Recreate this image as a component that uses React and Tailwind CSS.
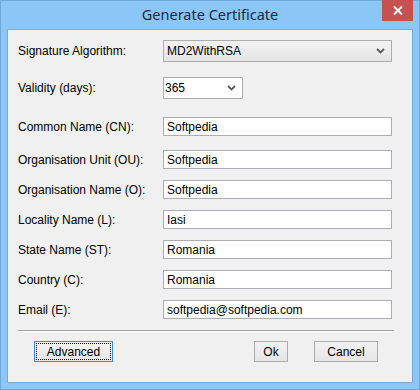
import React from 'react';

const Chevron = () => (
    <svg width="9" height="6" viewBox="0 0 9 6" className="shrink-0">
        <path d="M1 1 L4.5 4.5 L8 1" fill="none" stroke="#5a5a5a" strokeWidth="1.8" />
    </svg>
);

const fields = [
    { label: 'Common Name (CN):', value: 'Softpedia', mt: 'mt-[18px]' },
    { label: 'Organisation Unit (OU):', value: 'Softpedia', mt: 'mt-[14px]' },
    { label: 'Organisation Name (O):', value: 'Softpedia', mt: 'mt-[11px]' },
    { label: 'Locality Name (L):', value: 'Iasi', mt: 'mt-[11px]' },
    { label: 'State Name (ST):', value: 'Romania', mt: 'mt-[11px]' },
    { label: 'Country (C):', value: 'Romania', mt: 'mt-[11px]' },
    { label: 'Email (E):', value: 'softpedia@softpedia.com', mt: 'mt-[11px]' },
];

const Row = ({ label, mt, children }) => (
    <div className={`flex items-center ${mt}`}>
        <div className="w-[145px] shrink-0">{label}</div>
        {children}
    </div>
);

export default function App() {
    return (
        <div
            className="w-[420px] h-[390px] bg-[#8cc6f6] border border-[#6fa9da] flex flex-col text-black"
            style={{ fontFamily: '"Liberation Sans", Arial, sans-serif' }}
        >
            {/* title bar */}
            <div className="relative h-[28px] shrink-0 flex items-center justify-center">
                <span
                    className="text-[14.5px] text-[#1c2a3c] -mt-[1px]"
                    style={{ fontFamily: '"Noto Sans", "Open Sans", sans-serif' }}
                >
                    Generate Certificate
                </span>
                <div className="absolute right-[6px] -top-px w-[31px] h-[21px] bg-[#c75050] flex items-center justify-center">
                    <svg width="10" height="9" viewBox="0 0 10 9">
                        <path d="M1 0.5 L9 8.5 M9 0.5 L1 8.5" stroke="#fff" strokeWidth="2" />
                    </svg>
                </div>
            </div>

            {/* client area */}
            <div className="mx-[6px] h-[354px] bg-[#f0f0f0] border border-[#72abdc] pl-[10px] text-[12px]">
                <Row label="Signature Algorithm:" mt="mt-[10px]">
                    <div className="w-[229px] h-[22px] border border-[#acacac] bg-gradient-to-b from-[#f2f2f2] to-[#e5e5e5] flex items-center justify-between pl-[3px] pr-[6px]">
                        <span>MD2WithRSA</span>
                        <Chevron />
                    </div>
                </Row>
                <Row label="Validity (days):" mt="mt-[15px]">
                    <div className="w-[80px] h-[22px] border border-[#acacac] bg-white flex items-center justify-between pl-[1px] pr-[6px]">
                        <span>365</span>
                        <Chevron />
                    </div>
                </Row>
                {fields.map((f) => (
                    <Row key={f.label} label={f.label} mt={f.mt}>
                        <div className="w-[229px] h-[19px] border border-[#abadb3] bg-white flex items-center pl-[3px]">
                            {f.value}
                        </div>
                    </Row>
                ))}

                <div className="mt-[11px] mr-[18px] h-[2px] border-t border-[#a0a0a0] border-b border-b-white" />

                <div className="flex items-center mt-[9px]">
                    <div className="ml-[16px] w-[79px] h-[21px] border border-[#3c8ad0] bg-gradient-to-b from-[#f4f4f4] to-[#e6e6e6] p-[1px]">
                        <div className="w-full h-full border border-dotted border-black flex items-center justify-center">
                            Advanced
                        </div>
                    </div>
                    <div className="ml-[141px] w-[34px] h-[21px] border border-[#acacac] bg-gradient-to-b from-[#f2f2f2] to-[#e5e5e5] flex items-center justify-center">
                        Ok
                    </div>
                    <div className="ml-[26px] w-[64px] h-[21px] border border-[#acacac] bg-gradient-to-b from-[#f2f2f2] to-[#e5e5e5] flex items-center justify-center">
                        Cancel
                    </div>
                </div>
            </div>
        </div>
    );
}
